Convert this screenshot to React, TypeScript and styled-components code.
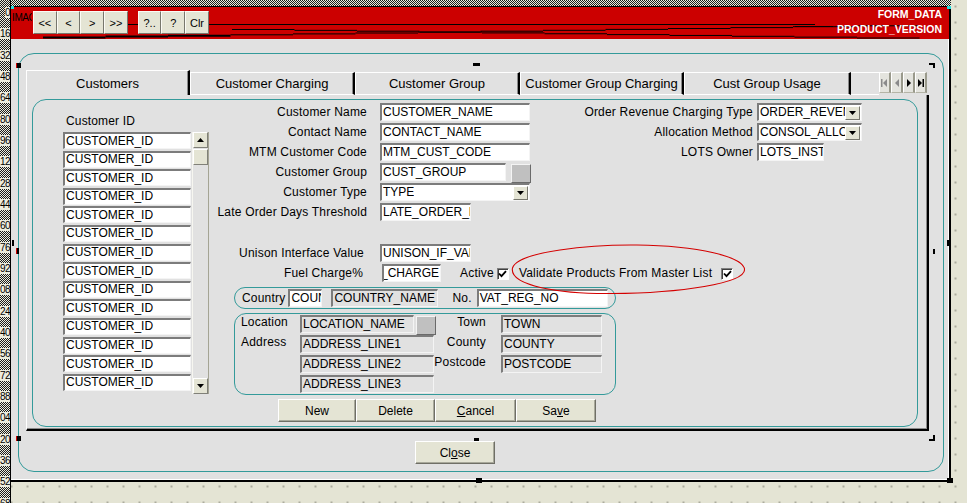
import React from "react";
import styled, { createGlobalStyle } from "styled-components";

const TEAL = "#339a9a";
const BEIGE = "#e4e4d4";
const PANEL = "#e1e1e1";
const FONT = `"Liberation Sans", Arial, Helvetica, sans-serif`;
const CHECKER = `repeating-conic-gradient(#1c1c1c 0% 25%, #ececde 0% 50%) 0 0 / 2px 2px`;

const GlobalStyle = createGlobalStyle`
  html, body { margin: 0; padding: 0; }
  body {
    width: 967px;
    height: 503px;
    overflow: hidden;
    background-color: ${BEIGE};
    background-image: radial-gradient(circle, #6a6a60 0.6px, transparent 0.8px);
    background-size: 16px 16px;
    background-position: 3.5px -1.5px;
    font-family: ${FONT};
    font-size: 12px;
    color: #000;
  }
`;

const Page = styled.div`
  position: relative;
  width: 967px;
  height: 503px;
  display: grid;
  grid-template-columns: 11px 940px 16px;
  grid-template-rows: 6px 476px 21px;
`;

const LeftRuler = styled.div`
  grid-column: 1;
  grid-row: 1 / span 3;
  box-sizing: border-box;
  border-right: 1px solid #000;
  background: ${CHECKER};
  display: flex;
  flex-direction: column;
  padding-top: 2px;
  overflow: hidden;
`;

const RulerTick = styled.div`
  flex: none;
  height: 21.33px;
  display: flex;
  align-items: center;
  justify-content: flex-end;
`;

const RulerNum = styled.span`
  background: #ececde;
  font: 10px/11px ${FONT};
  letter-spacing: -0.6px;
  white-space: nowrap;
`;

const TopRuler = styled.div`
  grid-column: 2;
  grid-row: 1;
  background: ${CHECKER};
`;

const Canvas = styled.div`
  grid-column: 2;
  grid-row: 2;
  box-sizing: border-box;
  background: ${PANEL};
  border-top: 1px solid #000;
  border-right: 2px solid #000;
  border-bottom: 2px solid #000;
  box-shadow: inset -1px -1px 0 #fff;
  display: flex;
  flex-direction: column;
`;

/* red toolbar strip */
const Header = styled.div`
  position: relative;
  flex: none;
  height: 32px;
  background: #cc0000;
  display: flex;
  align-items: flex-start;
  padding-right: 7px;
`;

const HeaderDecor = styled.svg`
  position: absolute;
  left: 0;
  top: 0;
  width: 100%;
  height: 100%;
  pointer-events: none;
`;

const FormName = styled.span`
  position: relative;
  flex: none;
  width: 20px;
  margin: 5px 0 0 1px;
  overflow: hidden;
  white-space: nowrap;
  font: 10px/12px ${FONT};
  letter-spacing: -0.4px;
`;

const NavGroup = styled.div<{ $gap: number }>`
  position: relative;
  display: flex;
  margin: 4px 0 0 ${(p) => p.$gap}px;
`;

const NavButton = styled.div`
  box-sizing: border-box;
  width: 23.7px;
  height: 23px;
  background: ${BEIGE};
  border: 1px solid;
  border-color: #fbfbf5 #77776d #77776d #fbfbf5;
  display: flex;
  align-items: center;
  justify-content: center;
  font: 11px ${FONT};
`;

const Spacer = styled.div`
  flex: 1;
`;

const TitleBlock = styled.div`
  position: relative;
  text-align: right;
  color: #fff;
  font: bold 10.5px/15px ${FONT};
`;

const OuterFrame = styled.div`
  flex: 1;
  margin: 14px 5px 8px 7px;
  border: 1px solid ${TEAL};
  border-radius: 16px;
  padding: 16px 14px 0 7px;
  display: flex;
  flex-direction: column;
`;

/* tabs */
const TabStrip = styled.div`
  flex: none;
  height: 25px;
  display: flex;
  align-items: flex-end;
`;

const Tab = styled.div<{ $w: number; $active?: boolean }>`
  box-sizing: border-box;
  width: ${(p) => p.$w}px;
  height: ${(p) => (p.$active ? 25 : 23)}px;
  border-top: 1px solid #fff;
  border-left: 1px solid #fff;
  border-right: 2px solid #000;
  border-bottom: ${(p) => (p.$active ? "none" : "1px solid #fff")};
  box-shadow: inset -1px 0 0 #8a8a8a;
  display: flex;
  align-items: center;
  justify-content: center;
  font: 13px ${FONT};
  white-space: nowrap;
`;

const TabFiller = styled.div`
  box-sizing: border-box;
  width: 28px;
  height: 23px;
  border-top: 1px solid #fff;
  border-bottom: 1px solid #fff;
`;

const TabScroll = styled.div`
  display: flex;
  height: 21px;
  margin-bottom: 2px;
`;

const TabScrollButton = styled.div`
  box-sizing: border-box;
  width: 12px;
  height: 21px;
  background: #e4e4de;
  border-top: 1px solid #fff;
  border-left: 1px solid #fff;
  border-right: 2px solid #9a9a8c;
  border-bottom: 1px solid #b4b4a6;
  display: flex;
  align-items: center;
  justify-content: center;
`;

const TabPanel = styled.div`
  box-sizing: border-box;
  flex: none;
  height: 336px;
  border-left: 1px solid #fff;
  border-right: 2px solid #000;
  border-bottom: 2px solid #000;
  box-shadow: inset -1px -1px 0 #8a8a8a;
  padding: 4px 9px 2px 5px;
  display: flex;
`;

const InnerFrame = styled.div`
  flex: 1;
  box-sizing: border-box;
  border: 1px solid ${TEAL};
  border-radius: 14px;
  display: flex;
  align-items: flex-start;
`;

/* customer id list */
const ListColumn = styled.div`
  flex: none;
  width: 146px;
  margin: 14px 0 0 30px;
`;

const ColumnLabel = styled.div`
  font: 12px/14px ${FONT};
  letter-spacing: 0.15px;
  padding-left: 3px;
  margin-bottom: 4px;
`;

const ListWrap = styled.div`
  display: flex;
  gap: 1px;
`;

const ListFields = styled.div`
  width: 128px;
  display: grid;
  grid-auto-rows: 18.6px;
`;

const ScrollBar = styled.div`
  box-sizing: border-box;
  width: 17px;
  height: 262px;
  display: flex;
  flex-direction: column;
  background: ${PANEL};
  border-left: 1px solid #f6f6f0;
  border-right: 1px solid #a4a494;
`;

const ScrollButton = styled.div<{ $gap?: number }>`
  box-sizing: border-box;
  flex: none;
  height: 16px;
  margin-top: ${(p) => p.$gap ?? 0}px;
  background: ${BEIGE};
  border: 1px solid;
  border-color: #fff #808078 #808078 #fff;
  display: flex;
  align-items: center;
  justify-content: center;
`;

const ScrollTrack = styled.div`
  flex: 1;
`;

/* form fields */
const MainColumn = styled.div`
  display: flex;
  flex-direction: column;
  margin-left: 3px;
`;

const FormGrid = styled.div`
  margin-top: 3px;
  display: grid;
  grid-template-columns: 168px 150px 227px 104px;
  grid-auto-rows: 20px;
  align-items: start;
`;

const FieldLabel = styled.span<{ $pad?: number; $w?: number; $first?: boolean }>`
  box-sizing: border-box;
  ${(p) => (p.$w ? `width: ${p.$w}px; flex: none;` : "")}
  ${(p) => (p.$first ? "grid-column: 1;" : "")}
  text-align: right;
  padding-right: ${(p) => p.$pad ?? 13}px;
  font: 12px/18px ${FONT};
  letter-spacing: 0.2px;
  white-space: nowrap;
`;

const Field = styled.div<{ $w: number; $muted?: boolean; $end?: boolean; $gap?: number }>`
  box-sizing: border-box;
  flex: none;
  width: ${(p) => p.$w}px;
  height: 18px;
  margin-left: ${(p) => p.$gap ?? 0}px;
  background: ${(p) => (p.$muted ? PANEL : "#fff")};
  border-style: solid;
  border-width: 2px 1px 1px 2px;
  border-color: #7c7c7c #f4f4f4 #f4f4f4 #7c7c7c;
  padding: 0 1px;
  display: flex;
  align-items: center;
  justify-content: ${(p) => (p.$end ? "flex-end" : "flex-start")};
  overflow: hidden;
  white-space: nowrap;
  font: 12px/15px ${FONT};
`;

const ListField = styled(Field)`
  height: 17px;
`;

const SelectField = styled(Field)`
  justify-content: space-between;
  padding-right: 1px;
`;

const SelectText = styled.span`
  overflow: hidden;
  white-space: nowrap;
`;

const DropButton = styled.span`
  box-sizing: border-box;
  flex: none;
  width: 15px;
  height: 14px;
  background: ${BEIGE};
  border: 1px solid;
  border-color: #fff #77776d #77776d #fff;
  display: flex;
  align-items: center;
  justify-content: center;
`;

const LovRow = styled.div`
  display: flex;
  align-items: flex-start;
`;

const LovButton = styled.span<{ $gap: number }>`
  box-sizing: border-box;
  flex: none;
  width: 20px;
  height: 19px;
  margin: 1px 0 0 ${(p) => p.$gap}px;
  background: #c0c0c0;
  border: 1px solid;
  border-color: #f4f4f4 #6a6a6a #6a6a6a #f4f4f4;
`;

const FormRow = styled.div<{ $top?: number }>`
  display: flex;
  align-items: flex-start;
  height: 20px;
  margin-top: ${(p) => p.$top ?? 0}px;
`;

const InlineLabel = styled.span<{ $gap: number }>`
  margin-left: ${(p) => p.$gap}px;
  font: 12px/18px ${FONT};
  letter-spacing: 0.2px;
  white-space: nowrap;
`;

const CheckBox = styled.span<{ $gap: number }>`
  box-sizing: border-box;
  flex: none;
  width: 12px;
  height: 12px;
  margin: 4px 0 0 ${(p) => p.$gap}px;
  background: #fff;
  border: 1px solid;
  border-color: #808080 #fff #fff #808080;
  box-shadow: inset 1px 1px 0 #404040;
  display: flex;
  align-items: center;
  justify-content: center;
`;

const Highlight = styled.div`
  position: relative;
  display: flex;
  align-items: flex-start;
  margin-left: 10px;
`;

const Ring = styled.svg`
  position: absolute;
  left: -7px;
  top: -20px;
  width: 234px;
  height: 51px;
  overflow: visible;
  pointer-events: none;
`;

const GroupBox = styled.div<{ $h: number; $r: number; $top: number }>`
  box-sizing: border-box;
  width: 382px;
  height: ${(p) => p.$h}px;
  margin: ${(p) => p.$top}px 0 0 22px;
  border: 1px solid ${TEAL};
  border-radius: ${(p) => p.$r}px;
`;

const CountryBox = styled(GroupBox)`
  display: flex;
  align-items: center;
  padding-left: 7px;
`;

const AddressBox = styled(GroupBox)`
  padding: 1px 0 0 6px;
  display: grid;
  grid-template-columns: 58px 135px 67px 101px;
  grid-auto-rows: 20px;
  align-items: start;
`;

const AddrLabel = styled.span<{ $right?: boolean }>`
  font: 12px/14px ${FONT};
  letter-spacing: 0.2px;
  white-space: nowrap;
  text-align: ${(p) => (p.$right ? "right" : "left")};
  padding-right: ${(p) => (p.$right ? 15 : 0)}px;
`;

const ButtonBar = styled.div`
  display: flex;
  margin: 4px 0 0 66px;
`;

const ActionButton = styled.div<{ $w: number }>`
  box-sizing: border-box;
  width: ${(p) => p.$w}px;
  height: 23px;
  background: ${BEIGE};
  border: 1px solid;
  border-color: #fff #6f6f66 #6f6f66 #fff;
  box-shadow: inset -1px -1px 0 #a8a89a;
  display: flex;
  align-items: center;
  justify-content: center;
  font: 12px ${FONT};
`;

const CloseRow = styled.div`
  display: flex;
  margin: 10px 0 0 389px;
`;

const Handle = styled.span<{ $x: number; $y: number; $w: number; $h: number; $c?: string }>`
  position: absolute;
  left: ${(p) => p.$x}px;
  top: ${(p) => p.$y}px;
  width: ${(p) => p.$w}px;
  height: ${(p) => p.$h}px;
  background: ${(p) => p.$c ?? "#000"};
`;

function Tri({ dir, color = "#000" }: { dir: "up" | "down" | "left" | "right"; color?: string }) {
  const pts = {
    up: "0,4 3.5,0 7,4",
    down: "0,0 7,0 3.5,4",
    left: "4,0 4,8 0,4",
    right: "0,0 0,8 4,4",
  }[dir];
  const vertical = dir === "up" || dir === "down";
  return (
    <svg width={vertical ? 7 : 4} height={vertical ? 4 : 8} viewBox={vertical ? "0 0 7 4" : "0 0 4 8"}>
      <polygon points={pts} fill={color} />
    </svg>
  );
}

function EdgeTri({ dir, color }: { dir: "first" | "last"; color: string }) {
  return (
    <svg width="7" height="8" viewBox="0 0 7 8">
      {dir === "first" ? (
        <>
          <rect x="0" y="0" width="1.5" height="8" fill={color} />
          <polygon points="6,0 6,8 2,4" fill={color} />
        </>
      ) : (
        <>
          <polygon points="1,0 1,8 5,4" fill={color} />
          <rect x="5.5" y="0" width="1.5" height="8" fill={color} />
        </>
      )}
    </svg>
  );
}

function Check() {
  return (
    <svg width="9" height="8" viewBox="0 0 9 8">
      <path d="M1 3.5 L3.5 6.2 L8 1.2" stroke="#000" strokeWidth="1.8" fill="none" />
    </svg>
  );
}

const RULER = Array.from({ length: 24 }, (_, k) => {
  const v = k * 16;
  return v < 10 ? String(v) : String(v).slice(-2);
});

const upperSteps = Array.from({ length: 14 }, (_, k) => ({
  x1: 43 + k * 62.5,
  x2: 43 + (k + 1) * 62.5,
  y: 37.5 - k * 0.9,
  w: k < 3 ? 2 : 1,
}));

const lowerSteps = Array.from({ length: 11 }, (_, k) => ({
  x1: 232 + k * 62.5,
  x2: 232 + (k + 1) * 62.5,
  y: 29.5 + k * 0.85,
  w: 1,
}));

const TABS = [
  { label: "Customers", w: 164, active: true },
  { label: "Customer Charging", w: 165 },
  { label: "Customer Group", w: 165 },
  { label: "Customer Group Charging", w: 164 },
  { label: "Cust Group Usage", w: 167 },
];

const HANDLES = [
  { x: 11, y: 6, w: 3, h: 3, c: "#22dddd" },
  { x: 947, y: 6, w: 4, h: 3, c: "#22dddd" },
  { x: 16, y: 63, w: 5, h: 5 },
  { x: 16, y: 63, w: 1, h: 5, c: "#d00000" },
  { x: 473, y: 63, w: 7, h: 3 },
  { x: 929, y: 63, w: 6, h: 2 },
  { x: 933, y: 63, w: 2, h: 5 },
  { x: 12, y: 240, w: 2, h: 6 },
  { x: 16, y: 248, w: 3, h: 6 },
  { x: 16, y: 248, w: 1, h: 6, c: "#d00000" },
  { x: 947, y: 240, w: 3, h: 6 },
  { x: 933, y: 249, w: 2, h: 5 },
  { x: 16, y: 436, w: 5, h: 5 },
  { x: 16, y: 436, w: 1, h: 5, c: "#d00000" },
  { x: 474, y: 438, w: 5, h: 3 },
  { x: 929, y: 439, w: 6, h: 2 },
  { x: 933, y: 435, w: 2, h: 6 },
  { x: 476, y: 478, w: 6, h: 5 },
  { x: 947, y: 478, w: 6, h: 5 },
];

export default function App() {
  return (
    <>
      <GlobalStyle />
      <Page>
        <LeftRuler>
          {RULER.map((n, i) => (
            <RulerTick key={i}>
              <RulerNum>{n}</RulerNum>
            </RulerTick>
          ))}
        </LeftRuler>
        <TopRuler />
        <Canvas>
          <Header>
            <HeaderDecor viewBox="11 7 938 32" preserveAspectRatio="none">
              {upperSteps.map((s, i) => (
                <line key={`u${i}`} x1={s.x1} x2={s.x2} y1={s.y} y2={s.y} stroke="#000" strokeWidth={s.w} />
              ))}
              {lowerSteps.map((s, i) => (
                <line key={`l${i}`} x1={s.x1} x2={s.x2} y1={s.y} y2={s.y} stroke="#000" strokeWidth={s.w} />
              ))}
              <line x1={127} x2={815} y1={24.5} y2={24.5} stroke="#000" strokeWidth={1} />
              <line x1={795} x2={833} y1={26.5} y2={26.5} stroke="#000" strokeWidth={1} />
            </HeaderDecor>
            <FormName>IMAGE_NAME</FormName>
            <NavGroup $gap={1}>
              <NavButton>{"<<"}</NavButton>
              <NavButton>{"<"}</NavButton>
              <NavButton>{">"}</NavButton>
              <NavButton>{">>"}</NavButton>
            </NavGroup>
            <NavGroup $gap={10}>
              <NavButton>?..</NavButton>
              <NavButton>?</NavButton>
              <NavButton>Clr</NavButton>
            </NavGroup>
            <Spacer />
            <TitleBlock>
              FORM_DATA
              <br />
              PRODUCT_VERSION
            </TitleBlock>
          </Header>

          <OuterFrame>
            <TabStrip>
              {TABS.map((t) => (
                <Tab key={t.label} $w={t.w} $active={t.active}>
                  {t.label}
                </Tab>
              ))}
              <TabFiller />
              <TabScroll>
                <TabScrollButton>
                  <EdgeTri dir="first" color="#8a8a8a" />
                </TabScrollButton>
                <TabScrollButton>
                  <Tri dir="left" color="#8a8a8a" />
                </TabScrollButton>
                <TabScrollButton>
                  <Tri dir="right" />
                </TabScrollButton>
                <TabScrollButton>
                  <EdgeTri dir="last" color="#000" />
                </TabScrollButton>
              </TabScroll>
            </TabStrip>

            <TabPanel>
              <InnerFrame>
                <ListColumn>
                  <ColumnLabel>Customer ID</ColumnLabel>
                  <ListWrap>
                    <ListFields>
                      {Array.from({ length: 14 }, (_, i) => (
                        <ListField key={i} $w={128}>
                          CUSTOMER_ID
                        </ListField>
                      ))}
                    </ListFields>
                    <ScrollBar>
                      <ScrollButton>
                        <Tri dir="up" />
                      </ScrollButton>
                      <ScrollButton $gap={1} />
                      <ScrollTrack />
                      <ScrollButton>
                        <Tri dir="down" />
                      </ScrollButton>
                    </ScrollBar>
                  </ListWrap>
                </ListColumn>

                <MainColumn>
                  <FormGrid>
                    <FieldLabel $first>Customer Name</FieldLabel>
                    <Field $w={150}>CUSTOMER_NAME</Field>
                    <FieldLabel $pad={4}>Order Revenue Charging Type</FieldLabel>
                    <SelectField $w={105}>
                      <SelectText>ORDER_REVENUE</SelectText>
                      <DropButton>
                        <Tri dir="down" />
                      </DropButton>
                    </SelectField>

                    <FieldLabel $first>Contact Name</FieldLabel>
                    <Field $w={150}>CONTACT_NAME</Field>
                    <FieldLabel $pad={4}>Allocation Method</FieldLabel>
                    <SelectField $w={105}>
                      <SelectText>CONSOL_ALLOC</SelectText>
                      <DropButton>
                        <Tri dir="down" />
                      </DropButton>
                    </SelectField>

                    <FieldLabel $first>MTM Customer Code</FieldLabel>
                    <Field $w={150}>MTM_CUST_CODE</Field>
                    <FieldLabel $pad={4}>LOTS Owner</FieldLabel>
                    <Field $w={67}>LOTS_INSTANCE</Field>

                    <FieldLabel $first>Customer Group</FieldLabel>
                    <LovRow>
                      <Field $w={126}>CUST_GROUP</Field>
                      <LovButton $gap={5} />
                    </LovRow>

                    <FieldLabel $first>Customer Type</FieldLabel>
                    <SelectField $w={150}>
                      <SelectText>TYPE</SelectText>
                      <DropButton>
                        <Tri dir="down" />
                      </DropButton>
                    </SelectField>

                    <FieldLabel $first>Late Order Days Threshold</FieldLabel>
                    <Field $w={91}>LATE_ORDER_DAYS</Field>
                  </FormGrid>

                  <FormRow $top={21}>
                    <FieldLabel $w={168} $pad={16}>
                      Unison Interface Value
                    </FieldLabel>
                    <Field $w={91}>UNISON_IF_VALUE</Field>
                  </FormRow>
                  <FormRow>
                    <FieldLabel $w={168} $pad={17}>
                      Fuel Charge%
                    </FieldLabel>
                    <Field $w={59} $gap={2} $end>
                      <span>FUEL_CHARGE</span>
                    </Field>
                    <InlineLabel $gap={19}>Active</InlineLabel>
                    <CheckBox $gap={3}>
                      <Check />
                    </CheckBox>
                    <Highlight>
                      <InlineLabel $gap={0}>Validate Products From Master List</InlineLabel>
                      <CheckBox $gap={9}>
                        <Check />
                      </CheckBox>
                      <Ring viewBox="0 0 234 51">
                        <path
                          d="M0.5 24 C6 7, 80 0.5, 125 1 C185 1.5, 233 13, 232.5 26 C232 39, 170 49, 100 49.5 C48 50, -3 42, 0.5 24 Z"
                          fill="none"
                          stroke="#d40000"
                          strokeWidth="1.1"
                        />
                      </Ring>
                    </Highlight>
                  </FormRow>

                  <CountryBox $h={22} $r={11} $top={3}>
                    <InlineLabel $gap={0}>Country</InlineLabel>
                    <Field $w={34} $gap={3}>
                      COUNTRY
                    </Field>
                    <Field $w={107} $gap={9} $muted>
                      COUNTRY_NAME
                    </Field>
                    <InlineLabel $gap={14}>No.</InlineLabel>
                    <Field $w={131} $gap={5}>
                      VAT_REG_NO
                    </Field>
                  </CountryBox>

                  <AddressBox $h={82} $r={12} $top={4}>
                    <AddrLabel>Location</AddrLabel>
                    <LovRow>
                      <Field $w={114} $gap={1} $muted>
                        LOCATION_NAME
                      </Field>
                      <LovButton $gap={2} />
                    </LovRow>
                    <AddrLabel $right>Town</AddrLabel>
                    <Field $w={101} $muted>
                      TOWN
                    </Field>

                    <AddrLabel>Address</AddrLabel>
                    <Field $w={134} $gap={1} $muted>
                      ADDRESS_LINE1
                    </Field>
                    <AddrLabel $right>County</AddrLabel>
                    <Field $w={101} $muted>
                      COUNTY
                    </Field>

                    <span />
                    <Field $w={134} $gap={1} $muted>
                      ADDRESS_LINE2
                    </Field>
                    <AddrLabel $right>Postcode</AddrLabel>
                    <Field $w={101} $muted>
                      POSTCODE
                    </Field>

                    <span />
                    <Field $w={134} $gap={1} $muted>
                      ADDRESS_LINE3
                    </Field>
                  </AddressBox>

                  <ButtonBar>
                    <ActionButton $w={78}>New</ActionButton>
                    <ActionButton $w={79}>Delete</ActionButton>
                    <ActionButton $w={81}>
                      <u>C</u>ancel
                    </ActionButton>
                    <ActionButton $w={80}>
                      Sa<u>v</u>e
                    </ActionButton>
                  </ButtonBar>
                </MainColumn>
              </InnerFrame>
            </TabPanel>

            <CloseRow>
              <ActionButton $w={80}>
                Cl<u>o</u>se
              </ActionButton>
            </CloseRow>
          </OuterFrame>
        </Canvas>

        {HANDLES.map((h, i) => (
          <Handle key={i} $x={h.x} $y={h.y} $w={h.w} $h={h.h} $c={h.c} />
        ))}
      </Page>
    </>
  );
}
